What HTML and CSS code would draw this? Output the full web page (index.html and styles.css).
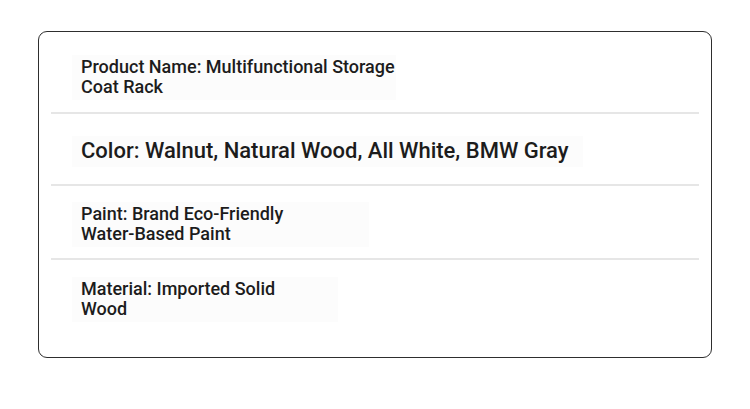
FILE: index.html
```html
<!DOCTYPE html>
<html lang="en">
<head>
<meta charset="utf-8">
<title>Product Specs</title>
<link rel="stylesheet" href="styles.css">
</head>
<body>
<div class="card">
  <div class="row row-1"><div class="txt small pad-1">Product Name: Multifunctional Storage<br>Coat Rack</div></div>
  <div class="row row-2"><div class="txt big">Color: Walnut, Natural Wood, All White, BMW Gray</div></div>
  <div class="row row-3"><div class="txt small pad-3">Paint: Brand Eco-Friendly<br>Water-Based Paint</div></div>
  <div class="row row-4"><div class="txt small pad-4">Material: Imported Solid<br>Wood</div></div>
</div>
</body>
</html>
```
FILE: styles.css
```css
html, body {
  margin: 0;
  padding: 0;
  background: #ffffff;
}
body {
  font-family: Roboto, "Liberation Sans", sans-serif;
  color: #1c1c1c;
}
.card {
  box-sizing: border-box;
  margin: 31px 0 0 38px;
  width: 674px;
  height: 327px;
  border: 1px solid #2e2e2e;
  border-radius: 9px;
  padding: 0 12px;
}
.row {
  padding-left: 21px;
  border-bottom: 2px solid #e6e6e6;
}
.row-4 { border-bottom: none; }
.txt {
  display: inline-block;
  font-weight: 500;
  background: #fcfcfc;
  padding: 2px 9px 3px 9px;
}
.pad-1 { padding-right: 1px; }
.pad-3 { padding-right: 86px; }
.pad-4 { padding-right: 63px; }
.small { font-size: 18px; line-height: 20px; }
.big { font-size: 22px; line-height: 26px; padding-right: 14px; }
.row-1 { padding-top: 23px; padding-bottom: 12px; }
.row-2 { padding-top: 22px; padding-bottom: 17px; }
.row-3 { padding-top: 16px; padding-bottom: 11px; }
.row-4 { padding-top: 17px; }
```
